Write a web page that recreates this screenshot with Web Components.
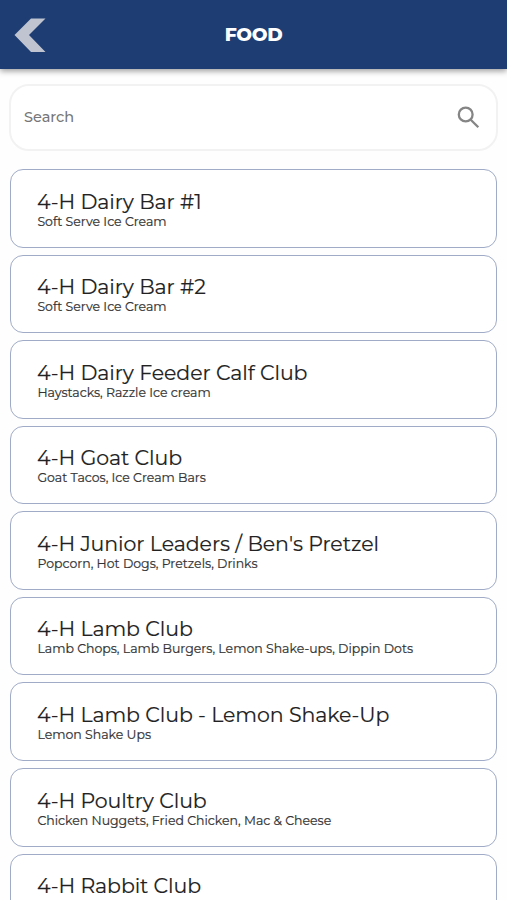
<!DOCTYPE html>
<html lang="en">
<head>
<meta charset="utf-8">
<meta name="viewport" content="width=device-width, initial-scale=1">
<title>Food</title>
<style>
    body{
        margin:0;
        height:100vh;
        overflow:hidden;
        background-color:#fefefe;
        font-family:Montserrat, Inter, sans-serif;
    }
</style>
</head>
<body>
<food-page>
    <app-header slot="header">FOOD</app-header>
    <search-box slot="search" placeholder="Search"></search-box>
    <food-card menu="Soft Serve Ice Cream">4-H Dairy Bar #1</food-card>
    <food-card menu="Soft Serve Ice Cream">4-H Dairy Bar #2</food-card>
    <food-card menu="Haystacks, Razzle Ice cream">4-H Dairy Feeder Calf Club</food-card>
    <food-card menu="Goat Tacos, Ice Cream Bars">4-H Goat Club</food-card>
    <food-card menu="Popcorn, Hot Dogs, Pretzels, Drinks">4-H Junior Leaders / Ben's Pretzel</food-card>
    <food-card menu="Lamb Chops, Lamb Burgers, Lemon Shake-ups, Dippin Dots">4-H Lamb Club</food-card>
    <food-card menu="Lemon Shake Ups">4-H Lamb Club - Lemon Shake-Up</food-card>
    <food-card menu="Chicken Nuggets, Fried Chicken, Mac &amp; Cheese">4-H Poultry Club</food-card>
    <food-card>4-H Rabbit Club</food-card>
</food-page>

<script>
class FoodPage extends HTMLElement {
    constructor(){
        super();
        this.attachShadow({mode:'open'});

        this.shadowRoot.innerHTML = `
            <style>
                :host{
                    display:flex;
                    flex-direction:column;
                    height:100vh;
                    overflow:hidden;
                }

                main{
                    flex:1;
                    min-height:0;
                    overflow:hidden;
                    padding:15px 9px 0;
                }

                .list{
                    display:grid;
                    grid-auto-rows:78.57px;
                    gap:7px;
                    margin:18px 1px 0;
                }
            </style>
            <slot name="header"></slot>
            <main>
                <slot name="search"></slot>
                <div class="list"><slot></slot></div>
            </main>
        `;
    }
}

class AppHeader extends HTMLElement {
    constructor(){
        super();
        this.attachShadow({mode:'open'});

        this.shadowRoot.innerHTML = `
            <style>
                :host{
                    display:grid;
                    grid-template-columns:60px 1fr 60px;
                    align-items:center;
                    position:relative;
                    height:69px;
                    flex:none;
                    background-color:#1d3d73;
                    box-shadow:0 2px 6px rgba(0,0,0,.4);
                    color:white;
                    font-size:18.7px;
                    font-weight:800;
                    letter-spacing:-.4px;
                    text-align:center;
                }

                svg{
                    display:block;
                }
            </style>
            <svg width="60" height="69" viewBox="0 0 60 69"><path fill="#bfc4d0" d="M31 18.5H45.5L29 35L45.5 52H31L14.5 35Z"/></svg>
            <span><slot></slot></span>
        `;
    }
}

class SearchBox extends HTMLElement {
    constructor(){
        super();
        this.attachShadow({mode:'open'});

        this.shadowRoot.innerHTML = `
            <style>
                :host{
                    display:flex;
                    align-items:center;
                    justify-content:space-between;
                    box-sizing:border-box;
                    height:67px;
                    padding:0 14px;
                    border:2px solid #f2f2f2;
                    border-radius:20px;
                    background-color:white;
                    color:#777;
                    font-size:14.5px;
                    font-weight:500;
                }

                span{
                    margin:0 0 2px -1px;
                }

                svg{
                    display:block;
                    margin-right:-1px;
                    fill:none;
                    stroke:#858585;
                    stroke-width:2.3;
                }
            </style>
            <span></span>
            <svg width="29" height="29" viewBox="0 0 29 29"><circle cx="11.7" cy="11.5" r="6.9"/><path d="M16.5 16.5L24.3 24.3"/></svg>
        `;
    }

    connectedCallback(){
        this.shadowRoot.querySelector('span').textContent = this.getAttribute('placeholder');
    }
}

class FoodCard extends HTMLElement {
    constructor(){
        super();
        this.attachShadow({mode:'open'});

        this.shadowRoot.innerHTML = `
            <style>
                :host{
                    display:block;
                    box-sizing:border-box;
                    padding:19.6px 26px 0;
                    border:1px solid #a0abc7;
                    border-radius:13px;
                    background-color:white;
                    color:#222;
                    white-space:nowrap;
                }

                .name{
                    height:24px;
                    font-size:20.5px;
                    line-height:24px;
                    letter-spacing:-.06px;
                    -webkit-text-stroke:.15px;
                }

                .menu{
                    height:16px;
                    padding-left:.4px;
                    font-size:12.5px;
                    line-height:16px;
                    color:#333;
                    -webkit-text-stroke:.2px;
                }
            </style>
            <div class="name"><slot></slot></div>
            <div class="menu"></div>
        `;
    }

    connectedCallback(){
        if (this.hasAttribute('menu')) {
            this.shadowRoot.querySelector('.menu').textContent = this.getAttribute('menu');
        }
    }
}

customElements.define('food-page', FoodPage);
customElements.define('app-header', AppHeader);
customElements.define('search-box', SearchBox);
customElements.define('food-card', FoodCard);
</script>
</body>
</html>
